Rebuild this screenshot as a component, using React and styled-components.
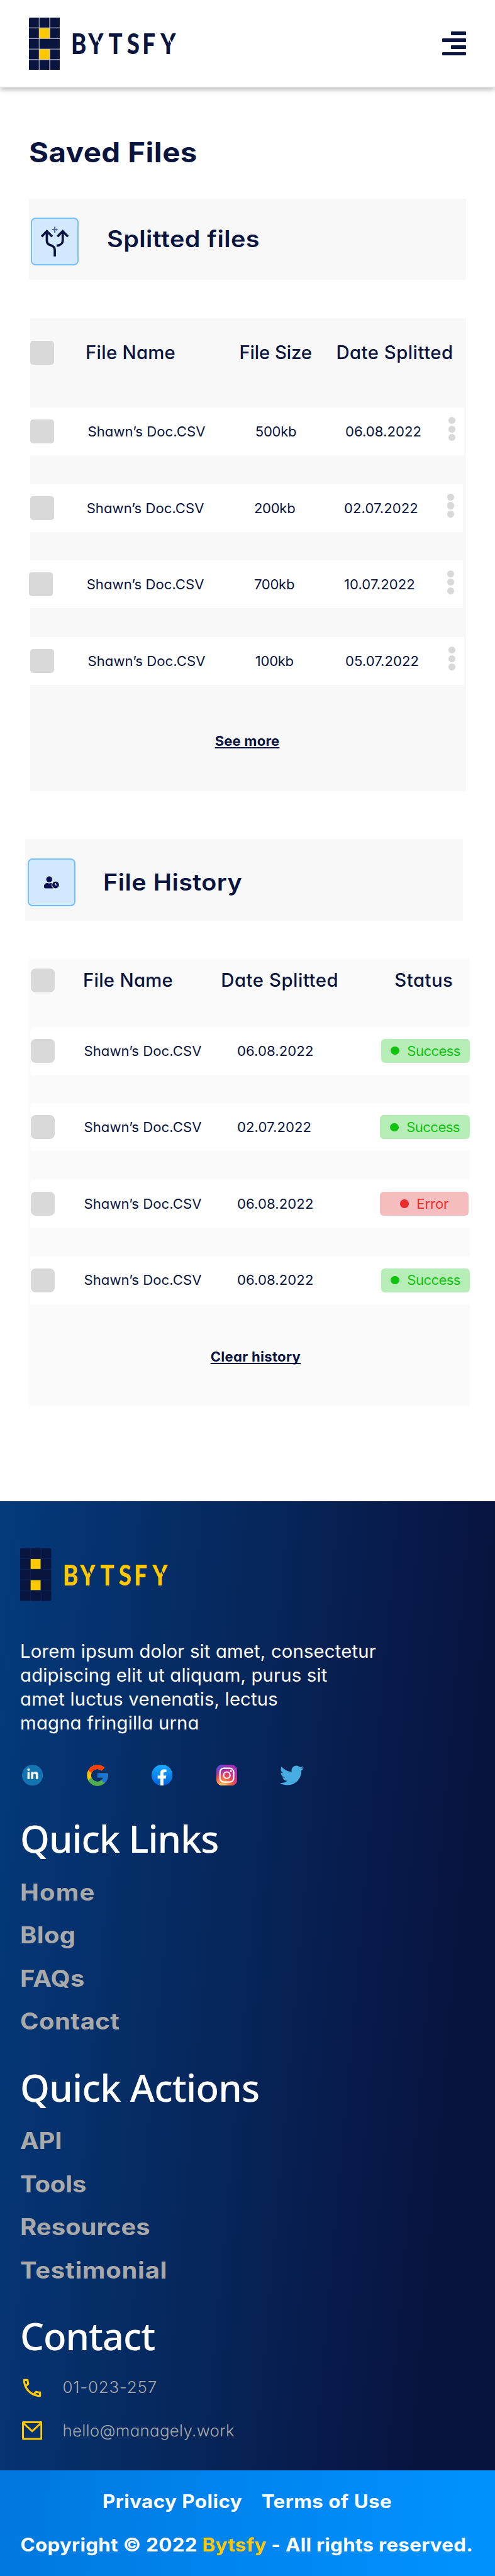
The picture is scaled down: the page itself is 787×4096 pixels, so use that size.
import React from "react";
import styled, { createGlobalStyle, css } from "styled-components";
import { FaUserClock, FaTwitter, FaLinkedinIn, FaFacebookF } from "react-icons/fa";
import { FcGoogle } from "react-icons/fc";
import { MdOutlineLocalPhone } from "react-icons/md";

/* Design units: the layout is drawn on an 828-unit wide artboard. */
const UNIT = 0.9504;
const u = (n) => `${(n * UNIT).toFixed(2)}px`;

const color = {
  navy: "#09143f",
  yellow: "#ffc800",
  panel: "#f8f8f8",
  panelLight: "#fbfbfb",
  box: "#d9d9d9",
  muted: "#a9a9a9",
};

const GlobalStyle = createGlobalStyle`
  *, *::before, *::after { box-sizing: border-box; }
  body {
    margin: 0;
    background: #fff;
    color: ${color.navy};
    font-family: Inter, "Open Sans", sans-serif;
    overflow-x: hidden;
  }
  h1, h2, p, ul { margin: 0; padding: 0; font-weight: inherit; }
  ul { list-style: none; }
  a { color: inherit; text-decoration: none; }
  svg { display: block; flex: none; }
`;

const body = css`
  font-feature-settings: "cv11";
  font-weight: 400;
  font-size: ${u(23.25)};
  line-height: ${u(32)};
  white-space: nowrap;
`;

/* Widens the display type sideways, keeping its left edge in place. */
const wide = css`
  transform: scaleX(${(p) => p.$stretch || 1.08});
  transform-origin: left center;
  white-space: nowrap;
`;

const Page = styled.div`
  width: 787px;
  height: 4096px;
  overflow: hidden;
`;

/* ---------- brand ---------- */

const Brand = styled.div`
  display: flex;
  align-items: center;
  gap: ${u(19.4)};
  color: ${(p) => p.$ink};
`;

const Wordmark = styled.div`
  display: flex;
  width: ${u(176)};
  font-family: Lato, sans-serif;
  font-weight: 900;
  font-size: ${u(47.1)};
  line-height: ${u(56)};
  transform: scaleX(0.82);
  transform-origin: left center;
`;

const Letter = styled.span`
  position: relative;
  flex: none;
  width: ${(p) => u(p.$w / 0.82)};
  ${(p) =>
    p.$cut &&
    css`
      &::after {
        content: "";
        position: absolute;
        left: ${u(18.6)};
        top: ${u(13.5)};
        width: ${u(2.1)};
        height: ${u(17)};
        background: ${p.$cut};
        transform: rotate(-31deg);
      }
    `}
`;

const LETTERS = [
  ["B", 28.7],
  ["Y", 33.9],
  ["T", 30.7],
  ["S", 26],
  ["F", 30.3],
  ["Y", 26],
];

function LogoMark({ line }) {
  const cols = [0, 17.6, 35.6];
  const rows = [0, 17.9, 35.6, 53.2, 70.9];
  return (
    <svg width={52 * UNIT} height={88 * UNIT} viewBox="0 0 52 88">
      <rect width="52" height="88" rx="1.6" fill={line} />
      <clipPath id="mark">
        <rect width="52" height="88" rx="1.6" />
      </clipPath>
      <g clipPath="url(#mark)">
        {rows.map((y, r) =>
          cols.map((x, c) => {
            if (r === 2 && c === 2) return null;
            const lit = c === 1 && (r === 1 || r === 3);
            return (
              <rect
                key={`${r}-${c}`}
                x={x}
                y={y}
                width={r === 2 && c === 1 ? 34.4 : 16.6}
                height={r === 4 ? 17.1 : 16.6}
                fill={lit ? color.yellow : color.navy}
              />
            );
          })
        )}
      </g>
    </svg>
  );
}

function Logo({ ink, line, cut }) {
  return (
    <Brand $ink={ink}>
      <LogoMark line={line} />
      <Wordmark>
        {LETTERS.map(([ch, w], i) => (
          <Letter key={i} $w={w} $cut={ch === "Y" ? cut : undefined}>
            {ch}
          </Letter>
        ))}
      </Wordmark>
    </Brand>
  );
}

/* ---------- top bar ---------- */

const TopBar = styled.header`
  display: flex;
  align-items: center;
  justify-content: space-between;
  height: ${u(146)};
  padding: 0 ${u(48)};
  background: #fff;
  box-shadow: 0 ${u(4)} ${u(8)} rgba(0, 0, 0, 0.28);
`;

const MenuButton = styled.div`
  display: flex;
  flex-direction: column;
  align-items: flex-end;
  gap: ${u(5.4)};
`;

const MenuBar = styled.span`
  width: ${(p) => u(p.$short ? 26 : 40)};
  height: ${u(6)};
  border-radius: 1px;
  background: ${color.navy};
`;

/* ---------- main ---------- */

const Main = styled.main`
  display: flow-root;
  height: ${u(2366)};
`;

const PageTitle = styled.h1`
  ${wide}
  margin: ${u(78.8)} 0 0 ${u(48)};
  font-weight: 700;
  font-size: ${u(46.2)};
  line-height: ${u(60)};
  letter-spacing: 0.4px;
`;

const SectionHeader = styled.div`
  display: flex;
  gap: ${u(46.5)};
  width: ${u(732)};
  height: ${u(136)};
  margin: ${(p) => u(p.$top)} 0 0 ${(p) => u(p.$left)};
  padding: ${u(32)} 0 0 ${u(4)};
  background: ${color.panel};
`;

const IconTile = styled.div`
  display: flex;
  align-items: center;
  justify-content: center;
  width: ${u(80)};
  height: ${u(80)};
  border: 2px solid #73bfff;
  border-radius: ${u(8)};
  background: #d3e9ff;
`;

const SectionTitle = styled.h2`
  ${wide}
  font-weight: 600;
  font-size: ${u(38.5)};
  line-height: ${(p) => u(p.$line)};
  letter-spacing: 0.42px;
`;

const Panel = styled.section`
  width: ${(p) => u(p.$w)};
  height: ${(p) => u(p.$h)};
  margin: ${u(64)} 0 0 ${(p) => u(p.$left)};
  background: ${(p) => p.$bg};
`;

const HeadRow = styled.div`
  display: grid;
  align-items: center;
  grid-template-columns: ${(p) => p.$cols.map(u).join(" ")};
  height: ${(p) => u(p.$h)};
  padding: 0 0 ${(p) => u(p.$bottom)} ${(p) => u(p.$inset || 0)};
`;

const HeadCell = styled.span`
  font-feature-settings: "cv11";
  font-weight: 500;
  font-size: ${u(30.8)};
  line-height: ${u(40)};
  letter-spacing: ${(p) => p.$track}px;
  white-space: nowrap;
`;

const Rows = styled.div`
  display: flex;
  flex-direction: column;
  gap: ${u(48)};
`;

const Row = styled.div`
  display: grid;
  align-items: center;
  grid-template-columns: ${(p) => p.$cols.map(u).join(" ")};
  width: ${(p) => u(p.$w)};
  height: ${u(80)};
  margin-left: ${(p) => u(p.$shift || 0)};
  background: #fff;
`;

const Checkbox = styled.span`
  width: ${u(40)};
  height: ${u(40)};
  margin-left: ${(p) => u(p.$nudge || 0)};
  border-radius: ${(p) => u(p.$r || 5)};
  background: ${color.box};
`;

const Cell = styled.span`
  ${body}
  letter-spacing: ${(p) => p.$track || 0}px;
`;

const MoreDots = styled.span`
  display: flex;
  flex-direction: column;
  gap: ${u(2.5)};
  margin-bottom: ${u(8)};
`;

const Dot = styled.i`
  width: ${u(12)};
  height: ${u(11.7)};
  border-radius: 50%;
  background: ${color.box};
`;

const PanelAction = styled.div`
  padding: ${(p) => p.$pad};
  text-align: center;
`;

const ActionLink = styled.a`
  ${body}
  font-weight: 700;
  letter-spacing: ${(p) => p.$track}px;
  text-decoration: underline;
  text-decoration-thickness: 1.5px;
  text-underline-offset: 2.4px;
  text-decoration-skip-ink: none;
`;

const Badge = styled.span`
  ${body}
  display: flex;
  align-items: center;
  justify-content: center;
  gap: ${u(13.3)};
  width: ${(p) => u(p.$w)};
  height: ${u(40)};
  border-radius: ${u(6)};
  letter-spacing: ${(p) => (p.$error ? -0.1 : -0.6)}px;
  color: ${(p) => (p.$error ? "#e92d2d" : "#0fc30f")};
  background: ${(p) => (p.$error ? "#f5bdbd" : "#b7edb7")};

  &::before {
    content: "";
    width: ${u(14.2)};
    height: ${u(14.2)};
    border-radius: 50%;
    background: currentColor;
  }
`;

/* ---------- footer ---------- */

const Footer = styled.footer`
  height: ${u(1621)};
  padding: ${u(79)} 0 0 ${u(33.8)};
  color: #fff;
  background: linear-gradient(95deg, #043a7b 0%, #062559 48%, #08133f 87%);
`;

const Blurb = styled.p`
  ${body}
  margin-top: ${u(64)};
  font-size: ${u(30.8)};
  line-height: ${u(39.9)};
  letter-spacing: 0.18px;
`;

const Socials = styled.div`
  display: flex;
  align-items: center;
  gap: ${u(73.5)};
  height: ${u(35)};
  margin: ${u(50)} 0 0 ${u(2.9)};
`;

const GoogleSlot = styled.span`
  margin: 0 ${u(-3.5)};
`;

const TwitterSlot = styled.span`
  margin-left: ${u(-2.4)};
`;

const FooterTitle = styled.h2`
  margin-top: ${(p) => u(p.$top)};
  font-family: "Noto Sans", "Open Sans", sans-serif;
  font-weight: 500;
  font-size: ${u(63)};
  line-height: ${u(80)};
  letter-spacing: ${(p) => p.$track}px;
`;

const FooterList = styled.ul`
  display: flex;
  flex-direction: column;
  gap: ${u(24)};
  margin-top: ${u(26.8)};
`;

const FooterLink = styled.li`
  ${wide}
  color: ${color.muted};
  font-weight: 700;
  font-size: ${u(38.2)};
  line-height: ${u(48)};
  letter-spacing: ${(p) => p.$track}px;
`;

const ContactList = styled(FooterList)`
  gap: ${u(32)};
`;

const ContactItem = styled.li`
  ${body}
  display: grid;
  grid-template-columns: ${u(70.8)} auto;
  align-items: center;
  height: ${u(40)};
  color: ${color.muted};
  font-weight: 300;
  font-size: ${u(27.2)};
  letter-spacing: ${(p) => p.$track}px;
`;

const IconSlot = styled.span`
  display: flex;
  justify-content: center;
  width: ${u(40)};
  color: ${color.yellow};
`;

const LegalBar = styled.div`
  display: flex;
  flex-direction: column;
  align-items: center;
  gap: ${u(32)};
  height: ${u(177)};
  padding-top: ${u(33)};
  background: linear-gradient(95deg, #0078dd 0%, #0091ff 93%);
  color: #fff;
  font-weight: 700;
  font-size: ${u(30.8)};
  line-height: ${u(40)};
  letter-spacing: 0.45px;
  white-space: nowrap;
`;

const LegalLinks = styled.div`
  display: flex;
  gap: ${u(30)};
  transform: scaleX(1.07);
`;

const Copyright = styled.p`
  margin-right: ${u(3)};
  letter-spacing: 0.29px;
  transform: scaleX(1.07);
`;

const Accent = styled.span`
  color: ${color.yellow};
`;

/* ---------- drawings ---------- */

const SplitIcon = () => (
  <svg width={76 * UNIT} height={76 * UNIT} viewBox="2 2 76 76" fill="none" stroke={color.navy} strokeWidth="3.9">
    <path d="M18 31.8 26.7 22.6 35.6 31.8M44.4 31.8 53.3 22.6 62 31.8" />
    <path d="M26.7 23v15.5c0 4 2.4 6.3 6 7.5 4.4 1.4 7.3 3.4 7.3 8V65" />
    <path d="M53.3 23v15c0 5.2-4 8.6-10.3 8.8" />
    <path d="M40 15v10" stroke="#5b6a92" strokeWidth="2.2" />
    <path d="M35.3 20h9.4" stroke="#5b6a92" strokeWidth="2" />
    <path d="M37.4 18.2v3.6M42.6 18.2v3.6" stroke="#5b6a92" strokeWidth="1.2" />
  </svg>
);

const SOCIAL = 35 * UNIT;

const LinkedIn = () => (
  <svg width={SOCIAL} height={SOCIAL} viewBox="0 0 35 35">
    <circle cx="17.5" cy="17.5" r="17.5" fill="#1275b1" />
    <FaLinkedinIn x="7.5" y="6" size={20.6} color="#fff" />
  </svg>
);

const Facebook = () => (
  <svg width={SOCIAL} height={SOCIAL} viewBox="0 0 35 35">
    <linearGradient id="fb" x1="0" y1="0" x2="0" y2="1">
      <stop offset="0" stopColor="#19acfe" />
      <stop offset="1" stopColor="#0163e1" />
    </linearGradient>
    <circle cx="17.5" cy="17.5" r="17.5" fill="url(#fb)" />
    <FaFacebookF x="3.85" y="7.7" size={27.3} color="#fff" />
  </svg>
);

const Instagram = () => (
  <svg width={SOCIAL} height={SOCIAL} viewBox="0 0 35 35">
    <radialGradient id="igWarm" cx="0.3" cy="1.05" r="1">
      <stop offset="0" stopColor="#fadb8a" />
      <stop offset="0.22" stopColor="#fba04a" />
      <stop offset="0.5" stopColor="#f0504a" />
      <stop offset="0.75" stopColor="#c8308c" />
      <stop offset="1" stopColor="#a033b0" />
    </radialGradient>
    <radialGradient id="igCool" cx="0" cy="0" r="0.6">
      <stop offset="0" stopColor="#3b5fe0" />
      <stop offset="1" stopColor="#7a3bd0" stopOpacity="0" />
    </radialGradient>
    <rect width="35" height="35" rx="9.5" fill="url(#igWarm)" />
    <rect width="35" height="35" rx="9.5" fill="url(#igCool)" />
    <g fill="none" stroke="#fff" strokeWidth="2.3">
      <rect x="6" y="6" width="23" height="23" rx="6.5" />
      <circle cx="17.5" cy="17.5" r="5.4" />
    </g>
    <circle cx="24.4" cy="10.6" r="1.7" fill="#fff" />
  </svg>
);

const MailIcon = () => (
  <svg width={34 * UNIT} height={31 * UNIT} viewBox="0 0 34 31" fill="none" stroke="currentColor" strokeWidth="3.2">
    <rect x="1.6" y="1.6" width="30.8" height="27.8" rx="0.5" />
    <path d="M2.5 3.2 17 16.6 31.5 3.2" />
  </svg>
);

/* ---------- data ---------- */

const FILES = [
  { size: "500kb", date: "06.08.2022" },
  { size: "200kb", date: "02.07.2022", shift: -2, nudge: 2 },
  { size: "700kb", date: "10.07.2022", shift: -2 },
  { size: "100kb", date: "05.07.2022" },
];

const HISTORY = [
  { date: "06.08.2022", status: "Success", left: 241.2, w: 148 },
  { date: "02.07.2022", status: "Success", left: 239.1, w: 150 },
  { date: "06.08.2022", status: "Error", left: 239.1, w: 148.5 },
  { date: "06.08.2022", status: "Success", left: 241.2, w: 148 },
];

const QUICK_LINKS = [
  ["Home", 1.1],
  ["Blog", 0.3],
  ["FAQs", 0.3],
  ["Contact", 0.45],
];

const QUICK_ACTIONS = [
  ["API", -0.2],
  ["Tools", -0.1],
  ["Resources", 0.05],
  ["Testimonial", 0.7],
];

export default function App() {
  return (
    <Page>
      <GlobalStyle />
      <TopBar>
        <Logo ink={color.navy} line="#c9ccd8" cut="#fff" />
        <MenuButton>
          <MenuBar $short />
          <MenuBar />
          <MenuBar $short />
          <MenuBar />
        </MenuButton>
      </TopBar>

      <Main>
        <PageTitle>Saved Files</PageTitle>

        <SectionHeader $top={47.2} $left={48}>
          <IconTile>
            <SplitIcon />
          </IconTile>
          <SectionTitle $line={72}>Splitted files</SectionTitle>
        </SectionHeader>

        <Panel $w={730} $h={792} $left={50} $bg={color.panel}>
          <HeadRow $cols={[93.1, 257.2, 162, 200]} $h={150} $bottom={34}>
            <Checkbox />
            <HeadCell $track={0.3}>File Name</HeadCell>
            <HeadCell $track={-0.1}>File Size</HeadCell>
            <HeadCell $track={0.5}>Date Splitted</HeadCell>
          </HeadRow>
          <Rows>
            {FILES.map((f, i) => (
              <Row key={i} $cols={[96.8, 280.2, 150.6, 172.3, 12]} $w={726} $shift={f.shift}>
                <Checkbox $nudge={f.nudge} />
                <Cell $track={0.05}>Shawn’s Doc.CSV</Cell>
                <Cell $track={-0.3}>{f.size}</Cell>
                <Cell $track={0.05}>{f.date}</Cell>
                <MoreDots>
                  <Dot />
                  <Dot />
                  <Dot />
                </MoreDots>
              </Row>
            ))}
          </Rows>
          <PanelAction $pad={`${u(77.7)} ${u(3)} 0 0`}>
            <ActionLink $track={0.17}>See more</ActionLink>
          </PanelAction>
        </Panel>

        <SectionHeader $top={80} $left={42.2}>
          <IconTile>
            <FaUserClock size={25 * UNIT} color="#0a1050" />
          </IconTile>
          <SectionTitle $line={80}>File History</SectionTitle>
        </SectionHeader>

        <Panel $w={737.3} $h={748.6} $left={48.5} $bg={color.panelLight}>
          <HeadRow $cols={[87.1, 230.8, 290.4, 120]} $h={114} $bottom={42} $inset={3.3}>
            <Checkbox $r={8} />
            <HeadCell $track={0.3}>File Name</HeadCell>
            <HeadCell $track={0.55}>Date Splitted</HeadCell>
            <HeadCell $track={0.5}>Status</HeadCell>
          </HeadRow>
          <Rows>
            {HISTORY.map((h, i) => (
              <Row key={i} $cols={[88.7, 256.2, h.left, 148]} $w={734} $shift={3.3}>
                <Checkbox $r={8} />
                <Cell $track={0.05}>Shawn’s Doc.CSV</Cell>
                <Cell $track={0.1}>{h.date}</Cell>
                <Badge $w={h.w} $error={h.status === "Error"}>
                  {h.status}
                </Badge>
              </Row>
            ))}
          </Rows>
          <PanelAction $pad={`${u(72)} 0 0 ${u(21)}`}>
            <ActionLink $track={0.28}>Clear history</ActionLink>
          </PanelAction>
        </Panel>
      </Main>

      <Footer>
        <Logo ink={color.yellow} line="#08265a" cut="#062e69" />
        <Blurb>
          Lorem ipsum dolor sit amet, consectetur
          <br />
          adipiscing elit ut aliquam, purus sit
          <br />
          amet luctus venenatis, lectus
          <br />
          magna fringilla urna
        </Blurb>
        <Socials>
          <LinkedIn />
          <GoogleSlot>
            <FcGoogle size={42 * UNIT} />
          </GoogleSlot>
          <Facebook />
          <Instagram />
          <TwitterSlot>
            <FaTwitter size={40 * UNIT} color="#47acdf" />
          </TwitterSlot>
        </Socials>

        <FooterTitle $top={48.5} $track={-1.1}>Quick Links</FooterTitle>
        <FooterList>
          {QUICK_LINKS.map(([label, track]) => (
            <FooterLink key={label} $track={track} $stretch={1.1}>{label}</FooterLink>
          ))}
        </FooterList>

        <FooterTitle $top={45.2} $track={-0.75}>Quick Actions</FooterTitle>
        <FooterList>
          {QUICK_ACTIONS.map(([label, track]) => (
            <FooterLink key={label} $track={track} $stretch={1.1}>{label}</FooterLink>
          ))}
        </FooterList>

        <FooterTitle $top={45.2} $track={-1.1}>Contact</FooterTitle>
        <ContactList>
          <ContactItem $track={0.9}>
            <IconSlot>
              <MdOutlineLocalPhone size={40 * UNIT} />
            </IconSlot>
            01-023-257
          </ContactItem>
          <ContactItem $track={0.3}>
            <IconSlot>
              <MailIcon />
            </IconSlot>
            hello@managely.work
          </ContactItem>
        </ContactList>
      </Footer>

      <LegalBar>
        <LegalLinks>
          <a>Privacy Policy</a>
          <a>Terms of Use</a>
        </LegalLinks>
        <Copyright>
          Copyright © 2022 <Accent>Bytsfy</Accent> - All rights reserved.
        </Copyright>
      </LegalBar>
    </Page>
  );
}
